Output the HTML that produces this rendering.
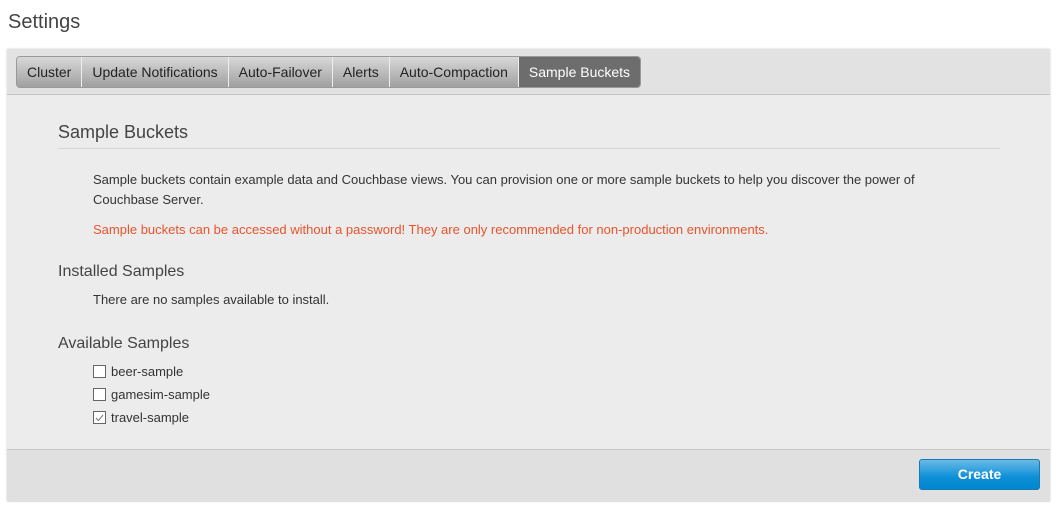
<!DOCTYPE html>
<html><head><meta charset="utf-8"><style>
body{margin:0;width:1058px;height:507px;background:#fff;font-family:"Liberation Sans",sans-serif;color:#333;position:relative;overflow:hidden}
.a{position:absolute;white-space:nowrap}
h1{position:absolute;left:8px;top:11px;margin:0;font-size:20px;font-weight:normal;color:#444}
.panel{position:absolute;left:7px;top:49px;width:1043px;height:452px;background:#ececec;box-shadow:0 0 2px #ccc}
.bar{position:absolute;left:0;top:0;width:1043px;height:45px;background:#e2e2e2;border-bottom:1px solid #c4c4c4}
.tabs{position:absolute;left:9px;top:7px;height:30px;display:flex;border:1px solid #999;border-radius:4px;overflow:hidden}
.tabs div{font-size:14px;line-height:30px;padding:0 10px;background:linear-gradient(#d8d8d8,#a0a0a0);color:#222;border-right:1px solid #eee}
.tabs div.on{background:#6d6d6d;color:#fff;border-right:0}
.foot{position:absolute;left:0;top:400px;width:1043px;height:52px;background:#dfe0df;border-top:1px solid #c8c8c8}
.btn{position:absolute;left:912px;top:9px;width:119px;height:29px;border:1px solid #1679b5;border-radius:3px;background:linear-gradient(#6abae8,#0c8fd6 60%,#0088d2);color:#fff;font-weight:bold;font-size:14px;text-align:center;line-height:29px}
.cb{display:inline-block;width:11px;height:11px;border:1px solid #666;background:#fff;vertical-align:-2px;margin-right:5px;position:relative}
</style></head><body>
<h1>Settings</h1>
<div class="panel">
<div class="bar"><div class="tabs"><div>Cluster</div><div>Update Notifications</div><div>Auto-Failover</div><div>Alerts</div><div>Auto-Compaction</div><div class="on">Sample Buckets</div></div></div>
<div class="a" style="left:51px;top:73px;font-size:18px;color:#444">Sample Buckets</div>
<div class="a" style="left:51px;top:99px;width:942px;border-top:1px solid #d6d6d6"></div>
<div class="a" style="left:86px;top:121px;font-size:13px;line-height:20px;white-space:normal;width:880px">Sample buckets contain example data and Couchbase views. You can provision one or more sample buckets to help you discover the power of Couchbase Server.</div>
<div class="a" style="left:86px;top:173px;font-size:13px;color:#e9532c">Sample buckets can be accessed without a password! They are only recommended for non-production environments.</div>
<div class="a" style="left:51px;top:214px;font-size:16px;color:#444">Installed Samples</div>
<div class="a" style="left:86px;top:243px;font-size:13px">There are no samples available to install.</div>
<div class="a" style="left:51px;top:286px;font-size:16px;color:#444">Available Samples</div>
<div class="a" style="left:86px;top:315px;font-size:13px"><span class="cb"></span>beer-sample</div>
<div class="a" style="left:86px;top:338px;font-size:13px"><span class="cb"></span>gamesim-sample</div>
<div class="a" style="left:86px;top:361px;font-size:13px"><span class="cb"><svg width="11" height="11" style="position:absolute;left:0;top:0"><path d="M2 6 L4.5 8.5 L9 3" fill="none" stroke="#777" stroke-width="1"/></svg></span>travel-sample</div>
<div class="foot"><div class="btn">Create</div></div>
</div>
</body></html>
